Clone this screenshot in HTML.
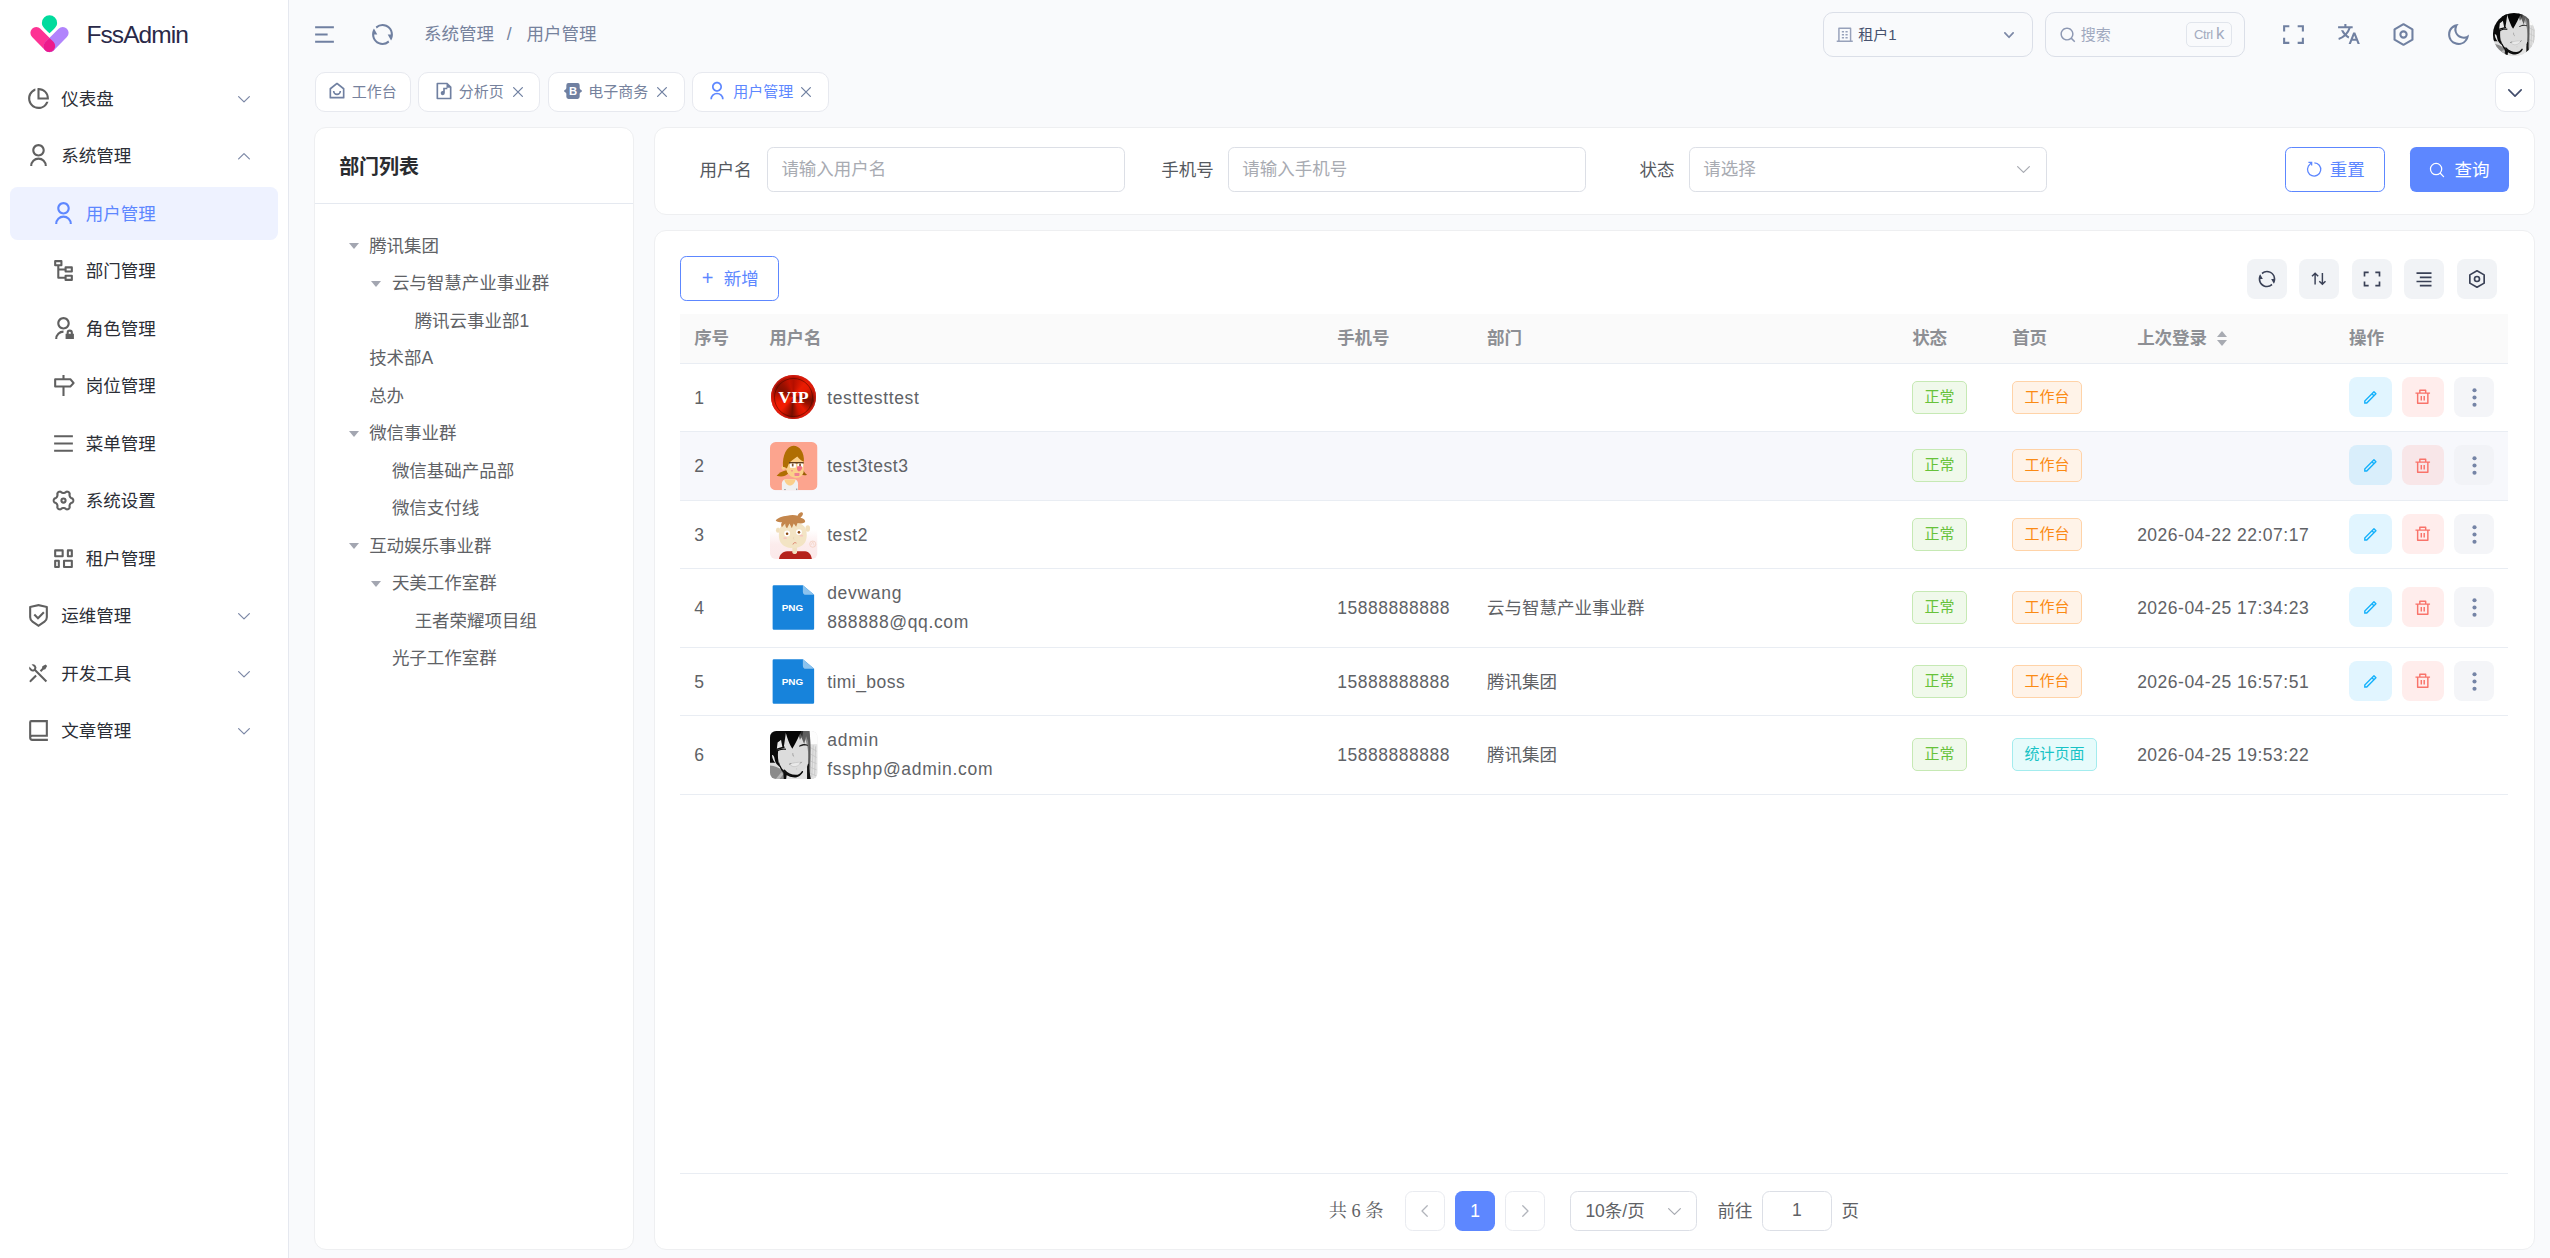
<!DOCTYPE html>
<html lang="zh-CN"><head><meta charset="utf-8"><title>FssAdmin</title><style>
*{box-sizing:border-box;margin:0;padding:0}
html,body{width:2550px;height:1258px;overflow:hidden;background:#f9fafc}
body{font-family:"Liberation Sans","Noto Sans CJK SC",sans-serif;font-size:14px;color:#2a3547}
@supports not (zoom:1.25){#app{transform:scale(1.25);transform-origin:0 0}}
#app{zoom:1.25;position:relative;width:2040px;height:1006.4px;overflow:hidden;background:#f9fafc}
.abs{position:absolute}
svg{display:block;overflow:visible}
.t{position:absolute;white-space:nowrap}
#side{position:absolute;left:0;top:0;width:230.8px;height:1006.4px;background:#fff;border-right:1px solid #e5e8ef}
.logo-t{left:69.2px;top:12.7px;font-size:19.6px;line-height:30px;color:#2a2948;letter-spacing:-.74px}
.mi{position:absolute;left:8px;width:214.4px;height:42.4px;border-radius:6px;color:#2b2e36;font-size:14px;line-height:42px}
.mi .tx{position:absolute;top:.7px;white-space:nowrap}
.mi.l1 .tx{left:41px}.mi.l2 .tx{left:60.6px}
.mi.act{background:#eef2ff;color:#5d87ff}
.bc{top:16.7px;font-size:14px;line-height:22px;color:#76829d}
.tab{position:absolute;top:57.8px;height:31.4px;background:#fff;border:1px solid #e7e9ef;border-radius:8px;font-size:12px;line-height:29.4px;color:#76829d;white-space:nowrap}
.tab .tx{position:absolute;top:.5px}
.tab.act{color:#5d87ff}
.card{position:absolute;background:#fff;border:1px solid #eeeff1;border-radius:9.6px}
.tn{position:absolute;font-size:14px;line-height:30px;height:30px;color:#606266;white-space:nowrap}
.ta{position:absolute;width:0;height:0;border-left:4.3px solid transparent;border-right:4.3px solid transparent;border-top:5.2px solid #a3a6b1}
.lbl{top:124px;font-size:14px;line-height:24px;color:#55595f}
.inp{position:absolute;top:117.7px;height:35.6px;width:286.6px;border:1px solid #dcdfe6;border-radius:5px;background:#fff;font-size:14px;line-height:33.6px;color:#a8abb2;padding-left:10.6px;white-space:nowrap}
.btn{position:absolute;border-radius:5px;font-size:14px;white-space:nowrap}
.th{top:258.7px;font-size:14px;line-height:24px;font-weight:700;color:#8d8f94}
.td{font-size:14px;line-height:23px;color:#606266}
.hl{position:absolute;left:544px;width:1462.4px;height:.8px;background:#e9edf3}
.tag{position:absolute;height:26.2px;border-radius:4px;font-size:12px;line-height:24.2px;text-align:center;border:1px solid;white-space:nowrap}
.tg{color:#67c23a;background:#f0f9eb;border-color:#c6e9b4;width:43.8px}
.to{color:#fb8a14;background:#fff3e8;border-color:#ffd3a8;width:55.9px}
.tc{color:#19c3c6;background:#e6fbfb;border-color:#a3ecee;width:68px}
.ab{position:absolute;height:32px;border-radius:6.4px}
.tb{position:absolute;top:207.2px;width:32px;height:32px;border-radius:6.4px;background:#f1f3f6;color:#363c4f}
.pg{font-size:14px;line-height:32px;color:#606266}
</style></head><body><div id="app">
<div id="side">
<svg class="abs" style="left:24.3px;top:11.6px" width="31" height="31" viewBox="0 0 31 31">
<path d="M15.6 .2a6.100 6.100 0 0 1 6.100 6.100c0 2.700-2.300 4.500-6.100 8.300-3.800-3.800-6.100-5.600-6.100-8.300A6.100 6.100 0 0 1 15.600 .2Z" fill="#01db9d"/>
<path d="M5 14.300L15.600 25" stroke="#fd3394" stroke-width="9.400" stroke-linecap="round"/>
<path d="M26.200 14.300L15.600 25" stroke="#b184fc" stroke-width="9.400" stroke-linecap="round"/>
<path d="M12.280 21.680l3.320-3.320 3.320 3.320a4.700 4.700 0 0 1-6.640 6.640 4.700 4.700 0 0 1 0-6.640Z" fill="#ed1a8c"/>
</svg>
<div class="t logo-t">FssAdmin</div>
<div class="mi l1" style="top:57.40px"><span class="abs" style="left:12.70px;top:11.00px;color:#606060;"><svg width="20" height="20" viewBox="0 0 24 24" fill="currentColor" style=""><path d="M9 2.458v2.124A8.003 8.003 0 0 0 12 20a8.003 8.003 0 0 0 7.419-5h2.123c-1.274 4.057-5.064 7-9.542 7-5.523 0-10-4.477-10-10 0-4.478 2.943-8.268 7-9.542zM12 2c5.523 0 10 4.477 10 10 0 .338-.017.67-.05 1H11V2.05c.329-.033.663-.05 1-.05zm1 2.062V11h6.938A8.004 8.004 0 0 0 13 4.062z"/></svg></span><span class="tx">仪表盘</span><svg class="abs" style="left:182.50px;top:19.30px" width="9.6" height="5.2" viewBox="0 0 9.6 5.2" fill="none" stroke="#7c88a6" stroke-width="1.0" stroke-linecap="round" stroke-linejoin="round"><path d="M0.5 0.5L4.8 4.7L9.1 0.5"/></svg></div>
<div class="mi l1" style="top:103.40px"><span class="abs" style="left:12.70px;top:11.00px;color:#606060;"><svg width="20" height="20" viewBox="0 0 24 24" fill="currentColor" style=""><path d="M4 22a8 8 0 1 1 16 0h-2a6 6 0 0 0-12 0H4zm8-9c-3.315 0-6-2.685-6-6s2.685-6 6-6 6 2.685 6 6-2.685 6-6 6zm0-2c2.21 0 4-1.79 4-4s-1.79-4-4-4-4 1.79-4 4 1.79 4 4 4z"/></svg></span><span class="tx">系统管理</span><svg class="abs" style="left:182.50px;top:18.80px" width="9.6" height="5.2" viewBox="0 0 9.6 5.2" fill="none" stroke="#7c88a6" stroke-width="1.0" stroke-linecap="round" stroke-linejoin="round"><path d="M0.5 4.7L4.8 0.5L9.1 4.7"/></svg></div>
<div class="mi l2 act" style="top:149.40px"><span class="abs" style="left:32.70px;top:11.00px;color:#5d87ff;"><svg width="20" height="20" viewBox="0 0 24 24" fill="currentColor" style=""><path d="M4 22a8 8 0 1 1 16 0h-2a6 6 0 0 0-12 0H4zm8-9c-3.315 0-6-2.685-6-6s2.685-6 6-6 6 2.685 6 6-2.685 6-6 6zm0-2c2.21 0 4-1.79 4-4s-1.79-4-4-4-4 1.79-4 4 1.79 4 4 4z"/></svg></span><span class="tx">用户管理</span></div>
<div class="mi l2" style="top:195.40px"><span class="abs" style="left:32.70px;top:11.00px;color:#606060;"><svg width="20" height="20" viewBox="0 0 24 24" fill="currentColor" style=""><path d="M10 2a1 1 0 0 1 1 1v4a1 1 0 0 1-1 1H8v2h5V9a1 1 0 0 1 1-1h6a1 1 0 0 1 1 1v4a1 1 0 0 1-1 1h-6a1 1 0 0 1-1-1v-1H8v6h5v-1a1 1 0 0 1 1-1h6a1 1 0 0 1 1 1v4a1 1 0 0 1-1 1h-6a1 1 0 0 1-1-1v-1H7a1 1 0 0 1-1-1V8H4a1 1 0 0 1-1-1V3a1 1 0 0 1 1-1h6zm9 16h-4v2h4v-2zm0-8h-4v2h4v-2zM9 4H5v2h4V4z"/></svg></span><span class="tx">部门管理</span></div>
<div class="mi l2" style="top:241.40px"><span class="abs" style="left:32.70px;top:11.00px;color:#606060;"><svg width="20" height="20" viewBox="0 0 24 24" fill="currentColor" style=""><path d="M12 14v2a6 6 0 0 0-6 6H4a8 8 0 0 1 8-8zm0-1c-3.315 0-6-2.685-6-6s2.685-6 6-6 6 2.685 6 6-2.685 6-6 6zm0-2c2.21 0 4-1.79 4-4s-1.79-4-4-4-4 1.79-4 4 1.79 4 4 4zm9 6h1v5h-8v-5h1v-1a3 3 0 0 1 6 0v1zm-2 0v-1a1 1 0 0 0-2 0v1h2z"/></svg></span><span class="tx">角色管理</span></div>
<div class="mi l2" style="top:287.40px"><span class="abs" style="left:32.70px;top:11.00px;color:#606060;"><svg width="20" height="20" viewBox="0 0 24 24" fill="currentColor" style=""><path d="M13 2v3h5.586a1 1 0 0 1 .707.293l3.1 3.5a1 1 0 0 1 0 1.414l-3.1 3.5a1 1 0 0 1-.707.293H13v8h-2v-8H4a1 1 0 0 1-1-1V6a1 1 0 0 1 1-1h7V2h2zm5.172 5H5v5h13.172l2.2-2.5-2.2-2.5z"/></svg></span><span class="tx">岗位管理</span></div>
<div class="mi l2" style="top:333.40px"><span class="abs" style="left:32.70px;top:11.00px;color:#606060;"><svg width="20" height="20" viewBox="0 0 24 24" fill="currentColor" style=""><path d="M3 4h18v2H3V4zm0 7h18v2H3v-2zm0 7h18v2H3v-2z"/></svg></span><span class="tx">菜单管理</span></div>
<div class="mi l2" style="top:379.40px"><span class="abs" style="left:32.70px;top:11.00px;color:#606060;"><svg width="20" height="20" viewBox="0 0 24 24" fill="none" stroke="currentColor" style=""><path d="M21.40 12.00 L21.39 12.25 L21.35 12.49 L21.30 12.73 L21.22 12.97 L21.11 13.20 L20.99 13.42 L20.83 13.64 L20.65 13.84 L20.42 14.02 L20.02 14.15 L19.61 14.25 L19.38 14.40 L19.18 14.54 L19.00 14.69 L18.84 14.83 L18.70 14.98 L18.57 15.13 L18.44 15.28 L18.33 15.44 L18.24 15.60 L18.15 15.77 L18.07 15.94 L17.99 16.12 L17.93 16.31 L17.88 16.51 L17.83 16.72 L17.79 16.95 L17.76 17.19 L17.76 17.46 L17.87 17.87 L17.96 18.28 L17.92 18.57 L17.84 18.83 L17.73 19.07 L17.60 19.29 L17.45 19.50 L17.28 19.69 L17.10 19.86 L16.91 20.01 L16.70 20.14 L16.48 20.25 L16.25 20.35 L16.02 20.42 L15.77 20.47 L15.52 20.49 L15.26 20.50 L15.00 20.47 L14.73 20.41 L14.46 20.30 L14.15 20.02 L13.85 19.72 L13.61 19.59 L13.39 19.49 L13.17 19.41 L12.97 19.34 L12.77 19.29 L12.57 19.25 L12.38 19.22 L12.19 19.21 L12.00 19.20 L11.81 19.21 L11.62 19.22 L11.43 19.25 L11.23 19.29 L11.03 19.34 L10.83 19.41 L10.61 19.49 L10.39 19.59 L10.15 19.72 L9.85 20.02 L9.54 20.30 L9.27 20.41 L9.00 20.47 L8.74 20.50 L8.48 20.49 L8.23 20.47 L7.98 20.42 L7.75 20.35 L7.52 20.25 L7.30 20.14 L7.09 20.01 L6.90 19.86 L6.72 19.69 L6.55 19.50 L6.40 19.29 L6.27 19.07 L6.16 18.83 L6.08 18.57 L6.04 18.28 L6.13 17.87 L6.24 17.46 L6.24 17.19 L6.21 16.95 L6.17 16.72 L6.12 16.51 L6.07 16.31 L6.01 16.12 L5.93 15.94 L5.85 15.77 L5.76 15.60 L5.67 15.44 L5.56 15.28 L5.43 15.13 L5.30 14.98 L5.16 14.83 L5.00 14.69 L4.82 14.54 L4.62 14.40 L4.39 14.25 L3.98 14.15 L3.58 14.02 L3.35 13.84 L3.17 13.64 L3.01 13.42 L2.89 13.20 L2.78 12.97 L2.70 12.73 L2.65 12.49 L2.61 12.25 L2.60 12.00 L2.61 11.75 L2.65 11.51 L2.70 11.27 L2.78 11.03 L2.89 10.80 L3.01 10.58 L3.17 10.36 L3.35 10.16 L3.58 9.98 L3.98 9.85 L4.39 9.75 L4.62 9.60 L4.82 9.46 L5.00 9.31 L5.16 9.17 L5.30 9.02 L5.43 8.87 L5.56 8.72 L5.67 8.56 L5.76 8.40 L5.85 8.23 L5.93 8.06 L6.01 7.88 L6.07 7.69 L6.12 7.49 L6.17 7.28 L6.21 7.05 L6.24 6.81 L6.24 6.54 L6.13 6.13 L6.04 5.72 L6.08 5.43 L6.16 5.17 L6.27 4.93 L6.40 4.71 L6.55 4.50 L6.72 4.31 L6.90 4.14 L7.09 3.99 L7.30 3.86 L7.52 3.75 L7.75 3.65 L7.98 3.58 L8.23 3.53 L8.48 3.51 L8.74 3.50 L9.00 3.53 L9.27 3.59 L9.54 3.70 L9.85 3.98 L10.15 4.28 L10.39 4.41 L10.61 4.51 L10.83 4.59 L11.03 4.66 L11.23 4.71 L11.43 4.75 L11.62 4.78 L11.81 4.79 L12.00 4.80 L12.19 4.79 L12.38 4.78 L12.57 4.75 L12.77 4.71 L12.97 4.66 L13.17 4.59 L13.39 4.51 L13.61 4.41 L13.85 4.28 L14.15 3.98 L14.46 3.70 L14.73 3.59 L15.00 3.53 L15.26 3.50 L15.52 3.51 L15.77 3.53 L16.02 3.58 L16.25 3.65 L16.48 3.75 L16.70 3.86 L16.91 3.99 L17.10 4.14 L17.28 4.31 L17.45 4.50 L17.60 4.71 L17.73 4.93 L17.84 5.17 L17.92 5.43 L17.96 5.72 L17.87 6.13 L17.76 6.54 L17.76 6.81 L17.79 7.05 L17.83 7.28 L17.88 7.49 L17.93 7.69 L17.99 7.88 L18.07 8.06 L18.15 8.23 L18.24 8.40 L18.33 8.56 L18.44 8.72 L18.57 8.87 L18.70 9.02 L18.84 9.17 L19.00 9.31 L19.18 9.46 L19.38 9.60 L19.61 9.75 L20.02 9.85 L20.42 9.98 L20.65 10.16 L20.83 10.36 L20.99 10.58 L21.11 10.80 L21.22 11.03 L21.30 11.27 L21.35 11.51 L21.39 11.75Z" stroke-width="2"/><circle cx="12" cy="12" r="2" stroke-width="2"/></svg></span><span class="tx">系统设置</span></div>
<div class="mi l2" style="top:425.40px"><span class="abs" style="left:32.70px;top:11.00px;color:#606060;"><svg width="20" height="20" viewBox="0 0 24 24" fill="none" stroke="currentColor" style=""><path d="M4 4.2h7.2v5.6H4zM16.200 4.200h3.800v5.600h-3.800zM4 14.200h3.500v6H4zM12.500 14.200H20v6h-7.500z" stroke-width="2" stroke-linejoin="round"/></svg></span><span class="tx">租户管理</span></div>
<div class="mi l1" style="top:471.40px"><span class="abs" style="left:12.70px;top:11.00px;color:#606060;"><svg width="20" height="20" viewBox="0 0 24 24" fill="currentColor" style=""><path d="M12 1l8.217 1.826a1 1 0 0 1 .783.976v9.987a6 6 0 0 1-2.672 4.992L12 23l-6.328-4.219A6 6 0 0 1 3 13.79V3.802a1 1 0 0 1 .783-.976L12 1zm0 2.049L5 4.604v9.185a4 4 0 0 0 1.781 3.328L12 20.597l5.219-3.48A4 4 0 0 0 19 13.79V4.604L12 3.05zm4.452 5.173l1.415 1.414L11.503 16 7.26 11.757l1.414-1.414 2.828 2.829 4.95-4.95z"/></svg></span><span class="tx">运维管理</span><svg class="abs" style="left:182.50px;top:19.30px" width="9.6" height="5.2" viewBox="0 0 9.6 5.2" fill="none" stroke="#7c88a6" stroke-width="1.0" stroke-linecap="round" stroke-linejoin="round"><path d="M0.5 0.5L4.8 4.7L9.1 0.5"/></svg></div>
<div class="mi l1" style="top:517.40px"><span class="abs" style="left:12.70px;top:11.00px;color:#606060;"><svg width="20" height="20" viewBox="0 0 24 24" fill="currentColor" style=""><path d="M5.33 3.271a3.5 3.5 0 0 1 4.254 4.963l10.709 10.71-1.414 1.414-10.71-10.71a3.502 3.502 0 0 1-4.962-4.255L5.444 7.63a1.5 1.5 0 1 0 2.121-2.121L5.329 3.27zm10.367 1.884l3.182-1.768 1.414 1.414-1.768 3.182-1.768.354-2.12 2.121-1.415-1.414 2.121-2.121.354-1.768zm-6.718 8.132l1.414 1.414-5.303 5.303a1 1 0 0 1-1.492-1.327l.078-.087 5.303-5.303z"/></svg></span><span class="tx">开发工具</span><svg class="abs" style="left:182.50px;top:19.30px" width="9.6" height="5.2" viewBox="0 0 9.6 5.2" fill="none" stroke="#7c88a6" stroke-width="1.0" stroke-linecap="round" stroke-linejoin="round"><path d="M0.5 0.5L4.8 4.7L9.1 0.5"/></svg></div>
<div class="mi l1" style="top:563.40px"><span class="abs" style="left:12.70px;top:11.00px;color:#606060;"><svg width="20" height="20" viewBox="0 0 24 24" fill="currentColor" style=""><path d="M21 18H6a1 1 0 0 0 0 2h15v2H6a3 3 0 0 1-3-3V4a2 2 0 0 1 2-2h16v16zM5 16.05c.162-.033.329-.05.5-.05H19V4H5v12.05z"/></svg></span><span class="tx">文章管理</span><svg class="abs" style="left:182.50px;top:19.30px" width="9.6" height="5.2" viewBox="0 0 9.6 5.2" fill="none" stroke="#7c88a6" stroke-width="1.0" stroke-linecap="round" stroke-linejoin="round"><path d="M0.5 0.5L4.8 4.7L9.1 0.5"/></svg></div>
</div>
<span class="abs" style="left:249.60px;top:17.60px;color:#7080a1;"><svg width="20" height="20" viewBox="0 0 24 24" fill="currentColor" style=""><path d="M3 4h18v2H3V4zm0 7h12v2H3v-2zm0 7h18v2H3v-2z"/></svg></span>
<span class="abs" style="left:296.00px;top:17.40px;color:#7080a1;"><svg width="20" height="20" viewBox="0 0 24 24" fill="currentColor" style=""><path d="M5.463 4.433A9.961 9.961 0 0 1 12 2c5.523 0 10 4.477 10 10 0 2.136-.67 4.116-1.81 5.74L17 12h3A8 8 0 0 0 6.46 6.228l-.997-1.795zm13.074 15.134A9.961 9.961 0 0 1 12 22C6.477 22 2 17.523 2 12c0-2.136.67-4.116 1.81-5.74L7 12H4a8 8 0 0 0 13.54 5.772l.997 1.795z"/></svg></span>
<div class="t bc" style="left:339.2px">系统管理</div><div class="t bc" style="left:405.4px">/</div><div class="t bc" style="left:421.2px">用户管理</div>
<div class="abs" style="left:1458.4px;top:9.8px;width:167.9px;height:35.7px;border:1px solid #dbdfe8;border-radius:8px"></div>
<span class="abs" style="left:1469.00px;top:20.70px;color:#97a1ba;"><svg width="14" height="14" viewBox="0 0 24 24" fill="currentColor" style=""><path d="M21 20h2v2H1v-2h2V3a1 1 0 0 1 1-1h16a1 1 0 0 1 1 1v17zm-2 0V4H5v16h14zM8 11h3v2H8v-2zm0-4h3v2H8V7zm0 8h3v2H8v-2zm5 0h3v2h-3v-2zm0-4h3v2h-3v-2zm0-4h3v2h-3V7z"/></svg></span>
<div class="t" style="left:1486.6px;top:16.6px;font-size:12px;line-height:22px;color:#47526f">租户1</div>
<svg class="abs" style="left:1603.20px;top:25.75px" width="8" height="4.9" viewBox="0 0 8 4.9" fill="none" stroke="#7c88a6" stroke-width="1.4" stroke-linecap="round" stroke-linejoin="round"><path d="M0.7 0.7L4.0 4.2L7.3 0.7"/></svg>
<div class="abs" style="left:1636px;top:9.8px;width:159.9px;height:35.7px;border:1px solid #dbdfe8;border-radius:8px"></div>
<span class="abs" style="left:1647.40px;top:20.90px;color:#8d98b3;"><svg width="14" height="14" viewBox="0 0 24 24" fill="currentColor" style=""><path d="M18.031 16.617l4.283 4.282-1.415 1.415-4.282-4.283A8.96 8.96 0 0 1 11 20c-4.968 0-9-4.032-9-9s4.032-9 9-9 9 4.032 9 9a8.96 8.96 0 0 1-1.969 5.617zm-2.006-.742A6.977 6.977 0 0 0 18 11c0-3.868-3.133-7-7-7-3.868 0-7 3.132-7 7 0 3.867 3.132 7 7 7a6.977 6.977 0 0 0 4.875-1.975l.15-.15z"/></svg></span>
<div class="t" style="left:1664.5px;top:16.6px;font-size:12px;line-height:22px;color:#a0a9bf">搜索</div>
<div class="t" style="left:1748.8px;top:17.7px;width:36.7px;height:19.8px;border:1px solid #e1e5ec;border-radius:4px;font-size:10.4px;line-height:17.8px;color:#a3abbf;text-align:center;letter-spacing:-.3px">Ctrl <span style="font-size:13.4px;position:relative;top:-.3px">k</span></div>
<span class="abs" style="left:1824.70px;top:17.70px;color:#7080a1;"><svg width="20" height="20" viewBox="0 0 24 24" fill="currentColor" style=""><path d="M20 3h2v6h-2V5h-4V3h4zM4 3h4v2H4v4H2V3h2zm16 16v-4h2v6h-6v-2h4zM4 19h4v2H2v-6h2v4z"/></svg></span>
<span class="abs" style="left:1868.90px;top:17.60px;color:#7080a1;"><svg width="20" height="20" viewBox="0 0 24 24" fill="currentColor" style=""><path d="M18.5 10l4.4 11h-2.155l-1.201-3h-4.09l-1.199 3h-2.154L16.5 10h2zM10 2v2h6v2h-1.968a18.222 18.222 0 0 1-3.62 6.301 14.864 14.864 0 0 0 2.336 1.707l-.751 1.878A17.015 17.015 0 0 1 9 13.725a16.676 16.676 0 0 1-6.201 3.548l-.536-1.929a14.7 14.7 0 0 0 5.327-3.042A18.078 18.078 0 0 1 4.767 8h2.24A16.032 16.032 0 0 0 9 10.877a16.165 16.165 0 0 0 2.91-4.876L2 6V4h6V2h2zm7.5 10.885L16.253 16h2.492L17.5 12.885z"/></svg></span>
<span class="abs" style="left:1912.60px;top:17.50px;color:#7080a1;"><svg width="20" height="20" viewBox="0 0 24 24" fill="none" stroke="currentColor" style=""><path d="M12 2.100l8.600 4.950v9.900L12 21.900l-8.600-4.950v-9.900z" stroke-width="2" stroke-linejoin="round"/><circle cx="12" cy="12" r="3" stroke-width="2"/></svg></span>
<span class="abs" style="left:1956.70px;top:17.50px;color:#7080a1;"><svg width="20" height="20" viewBox="0 0 24 24" fill="currentColor" style=""><path d="M10 7a7 7 0 0 0 12 4.9v.1c0 5.523-4.477 10-10 10S2 17.523 2 12 6.477 2 12 2h.1A6.979 6.979 0 0 0 10 7zm-6 5a8 8 0 0 0 15.062 3.762A9 9 0 0 1 8.238 4.938 7.999 7.999 0 0 0 4 12z"/></svg></span>
<div class="abs" style="left:1994px;top:10.2px;width:34.2px;height:34.2px;border-radius:50%;overflow:hidden"><svg width="34.200" height="34.200" viewBox="0 0 100 100"><rect width="100" height="100" fill="#dcdcdc"/><rect x="82" y="0" width="18" height="28" fill="#fdfdfd"/><rect x="82" y="28" width="18" height="72" fill="#e2e2e2"/><path d="M84 34l14 8M85 48l13 7M84 62l14 6M86 76l12 5M85 88l13 6M91 30l-3 66M96 32l-2 60" stroke="#c4c4c4" stroke-width="1.600" fill="none"/><path d="M14 40c0-16 10-30 30-34 18-3 32 2 36 18 3 14 4 32 0 46-4 14-14 24-24 24-16 0-30-10-36-26-3-8-6-18-6-28Z" fill="#dcdcdc"/><path d="M66 0h17c2 14 3 30 2 46 1 20 0 38-1 54h-6c2-10 0-20 2-30 1-14 1-28-2-40-2-10-6-20-12-30Z" fill="#8f8f8f"/><path d="M79 0h4c2 20 3 44 1 68l-4 4c2-24 1-48-1-72Z" fill="#5c5c5c"/><path d="M58 0h24l-1 24-5-13-4 16-6-14-3 6Z" fill="#5e5e5e"/><path d="M60 0h10l-2 12Z" fill="#2c2c2c"/><path d="M80 68c2 0 3 1 3 3-1 9 1 19 3 29h-8c-2-10-2-23 2-32Z" fill="#141414"/><path d="M34 86c8 6 20 8 30 2l14-14v26H34Z" fill="#e4e4e4"/><path d="M0 72c10 1 18 4 24 9 5 5 9 12 10 19H0Z" fill="#8b8b8b"/><path d="M12 100l12-14 4 4-8 10Z" fill="#b9b9b9"/><path d="M19 64c2 9 8 19 18 25 8 5 18 6 25 3 3-1 5-4 6-7-2 7-8 12-16 12-5 0-9-1-13-3l-4-2-1 8h-5l-1-13c-6-6-9-14-9-23Z" fill="#0c0c0c"/><path d="M30 82c6 7 15 11 24 11 6 0 11-3 14-8" fill="none" stroke="#0c0c0c" stroke-width="3.400" stroke-linecap="round"/><path d="M0 0h34c-6 8-12 18-15 30-3 12-3 24-1 34 1 5 3 9 5 12-4-2-8-6-11-10H0Z" fill="#0a0a0a"/><path d="M4 50c2-1 4 1 5 5 1 5 2 9 4 13-4-3-8-9-9-18Z" fill="#e8e8e8"/><path d="M16 24l8-6-1 8 6-4-2 12-6 2-7 4Z" fill="#e9e9e9"/><path d="M13 40l18-5-1-3-17 5Z" fill="#0b0b0b"/><path d="M20 0h14l-5 34c-1 0-2 0-3-1-2-10-4-22-6-33Z" fill="#0a0a0a"/><path d="M32 0h34c-3 6-6 12-9 19-3 6-6 12-10 18-5-7-8-16-11-24-1-4-3-9-4-13Z" fill="#050505"/><path d="M13 42c6-5 13-7 21-5l-1 2.500c-7-1-13 0-19 4.500Z" fill="#111"/><path d="M61 31c6-4 13-5 19-2l-1 2c-6-2-11-1-17 2Z" fill="#222"/><path d="M48 47c0 2 0 5 2 6" stroke="#8f8f8f" stroke-width="1.600" fill="none" stroke-linecap="round"/><path d="M41 69c8-3 17-4 25-4-3 4-7 8-12 9-5 1-10-1-13-5Z" fill="#e9e9e9" stroke="#b5b5b5" stroke-width="1"/><path d="M41 69l3-1M66 65l-2 2" stroke="#6a6a6a" stroke-width="1.400" stroke-linecap="round"/><circle cx="56" cy="79" r="1.200" fill="#c6c6c6"/></svg></div>
<div class="tab" style="left:251.6px;width:76.8px"><span class="abs" style="left:9.10px;top:6.30px;color:#7080a1;"><svg width="16" height="16" viewBox="0 0 24 24" fill="currentColor" style=""><path d="M19 19V9.799l-7-5.522-7 5.522V19h14zm2 1a1 1 0 0 1-1 1H4a1 1 0 0 1-1-1V9.314a1 1 0 0 1 .38-.785l8-6.311a1 1 0 0 1 1.24 0l8 6.31a1 1 0 0 1 .38.786V20zM7 12h2a3 3 0 0 0 6 0h2a5 5 0 0 1-10 0z"/></svg></span><span class="tx" style="left:29.0px">工作台</span></div>
<div class="tab" style="left:334.4px;width:97.4px"><span class="abs" style="left:11.70px;top:6.30px;color:#7080a1;"><svg width="16" height="16" viewBox="0 0 24 24" fill="currentColor" style=""><path d="M16 8v2h-3v4.5a2.5 2.5 0 1 1-2-2.45V8h4V4H5v16h14V8h-3zM3 2.992C3 2.444 3.447 2 3.999 2H16l5 5v13.993A1 1 0 0 1 20.007 22H3.993A1 1 0 0 1 3 21.008V2.992z"/></svg></span><span class="tx" style="left:31.799999999999997px">分析页</span><svg class="abs" style="left:74.8px;top:11.2px" width="8" height="8" viewBox="0 0 8 8" fill="none" stroke="#7080a1" stroke-width="1" stroke-linecap="round"><path d="M.5.5l7 7M7.500.5l-7 7"/></svg></div>
<div class="tab" style="left:438.5px;width:109.4px"><span class="abs" style="left:11.40px;top:6.30px;color:#7080a1;"><svg width="16" height="16" viewBox="0 0 24 24" style=""><path d="M6.500 2.500h11a2.500 2.500 0 0 1 2.500 2.500v3.200c0 1.300.800 2.300 2.500 2.800v2c-1.700.500-2.500 1.500-2.500 2.800V19a2.500 2.500 0 0 1-2.500 2.500h-11A2.500 2.500 0 0 1 4 19v-3.200c0-1.300-.800-2.300-2.500-2.800v-2C3.200 10.500 4 9.500 4 8.200V5a2.500 2.500 0 0 1 2.500-2.500z" fill="currentColor"/><text x="12.100" y="16.900" text-anchor="middle" font-family="Liberation Sans,sans-serif" font-weight="700" font-size="13.500" fill="#fff">B</text></svg></span><span class="tx" style="left:31.299999999999997px">电子商务</span><svg class="abs" style="left:86.0px;top:11.2px" width="8" height="8" viewBox="0 0 8 8" fill="none" stroke="#7080a1" stroke-width="1" stroke-linecap="round"><path d="M.5.5l7 7M7.500.5l-7 7"/></svg></div>
<div class="tab act" style="left:553.6px;width:109.3px"><span class="abs" style="left:11.50px;top:6.30px;color:#5d87ff;"><svg width="16" height="16" viewBox="0 0 24 24" fill="currentColor" style=""><path d="M4 22a8 8 0 1 1 16 0h-2a6 6 0 0 0-12 0H4zm8-9c-3.315 0-6-2.685-6-6s2.685-6 6-6 6 2.685 6 6-2.685 6-6 6zm0-2c2.21 0 4-1.79 4-4s-1.79-4-4-4-4 1.79-4 4 1.79 4 4 4z"/></svg></span><span class="tx" style="left:32.2px">用户管理</span><svg class="abs" style="left:86.6px;top:11.2px" width="8" height="8" viewBox="0 0 8 8" fill="none" stroke="#7080a1" stroke-width="1" stroke-linecap="round"><path d="M.5.5l7 7M7.500.5l-7 7"/></svg></div>
<div class="abs" style="left:1996.3px;top:57.8px;width:31.4px;height:31.4px;background:#fff;border:1px solid #e7e9ef;border-radius:8px"></div>
<svg class="abs" style="left:2006.30px;top:71.10px" width="11.2" height="6.4" viewBox="0 0 11.2 6.4" fill="none" stroke="#414c6b" stroke-width="1.3" stroke-linecap="round" stroke-linejoin="round"><path d="M0.65 0.65L5.6 5.75L10.549999999999999 0.65"/></svg>
<div class="card" style="left:251.2px;top:101.6px;width:256px;height:898.4px"></div>
<div class="t" style="left:271.3px;top:121.4px;font-size:16px;line-height:24px;font-weight:700;color:#2a2c30">部门列表</div>
<div class="abs" style="left:252px;top:162.4px;width:254.4px;height:.8px;background:#e5e9f0"></div>
<div class="tn" style="left:295.3px;top:182.1px">腾讯集团</div>
<div class="ta" style="left:279.3px;top:194.5px"></div>
<div class="tn" style="left:313.5px;top:212.1px">云与智慧产业事业群</div>
<div class="ta" style="left:296.9px;top:224.5px"></div>
<div class="tn" style="left:331.7px;top:242.1px">腾讯云事业部1</div>
<div class="tn" style="left:295.3px;top:272.1px">技术部A</div>
<div class="tn" style="left:295.3px;top:302.1px">总办</div>
<div class="tn" style="left:295.3px;top:332.1px">微信事业群</div>
<div class="ta" style="left:279.3px;top:344.5px"></div>
<div class="tn" style="left:313.5px;top:362.1px">微信基础产品部</div>
<div class="tn" style="left:313.5px;top:392.1px">微信支付线</div>
<div class="tn" style="left:295.3px;top:422.1px">互动娱乐事业群</div>
<div class="ta" style="left:279.3px;top:434.5px"></div>
<div class="tn" style="left:313.5px;top:452.1px">天美工作室群</div>
<div class="ta" style="left:296.9px;top:464.5px"></div>
<div class="tn" style="left:331.7px;top:482.1px">王者荣耀项目组</div>
<div class="tn" style="left:313.5px;top:512.1px">光子工作室群</div>
<div class="card" style="left:523.2px;top:101.6px;width:1504.8px;height:70.4px"></div>
<div class="t lbl" style="left:559.5px">用户名</div><div class="inp" style="left:613.7px">请输入用户名</div>
<div class="t lbl" style="left:929px">手机号</div><div class="inp" style="left:982.4px">请输入手机号</div>
<div class="t lbl" style="left:1311.6px">状态</div><div class="inp" style="left:1351.2px">请选择</div>
<svg class="abs" style="left:1613.60px;top:133.00px" width="10.4" height="5.6" viewBox="0 0 10.4 5.6" fill="none" stroke="#a8abb2" stroke-width="1.0" stroke-linecap="round" stroke-linejoin="round"><path d="M0.5 0.5L5.2 5.1L9.9 0.5"/></svg>
<div class="btn" style="left:1828px;top:117.7px;width:80px;height:35.6px;border:1px solid #5d87ff;color:#5d87ff;background:#fff;line-height:33.6px"><span class="abs" style="left:35px;top:.8px">重置</span></div>
<svg class="abs" style="left:1844.4px;top:129px" width="12.2" height="12.2" viewBox="0 0 24 24" fill="none" stroke="#5d87ff" stroke-width="2" stroke-linecap="butt" stroke-linejoin="miter"><path d="M13.160 2.800A10.400 10.400 0 1 1 3.700 8.160L8.900 2.200"/><path d="M3.800 2.200h5.100v5"/></svg>
<div class="btn" style="left:1928px;top:117.7px;width:79.3px;height:35.6px;background:#5d87ff;color:#fff;line-height:35.6px"><span class="abs" style="left:35.6px;top:.8px">查询</span></div>
<svg class="abs" style="left:1943.5px;top:129.3px" width="12.6" height="12.6" viewBox="0 0 24 24" fill="none" stroke="#fff" stroke-width="1.9" stroke-linecap="round"><circle cx="10.800" cy="10.800" r="8.600"/><path d="M17.200 17.200l5 5"/></svg>
<div class="card" style="left:523.2px;top:184px;width:1504.8px;height:816px"></div>
<div class="btn" style="left:544px;top:205px;width:79.200px;height:35.600px;border:1px solid #5d87ff;color:#5d87ff;background:#fff;line-height:33.6px"><span class="abs" style="left:16.600px;font-size:16px;top:-.5px">+</span><span class="abs" style="left:34.200px;top:.8px">新增</span></div>
<div class="tb" style="left:1797.2px"><span class="abs" style="left:8.10px;top:8.10px;color:#3a4156;"><svg width="16" height="16" viewBox="0 0 24 24" fill="currentColor" style=""><path d="M5.463 4.433A9.961 9.961 0 0 1 12 2c5.523 0 10 4.477 10 10 0 2.136-.67 4.116-1.81 5.74L17 12h3A8 8 0 0 0 6.46 6.228l-.997-1.795zm13.074 15.134A9.961 9.961 0 0 1 12 22C6.477 22 2 17.523 2 12c0-2.136.67-4.116 1.81-5.74L7 12H4a8 8 0 0 0 13.54 5.772l.997 1.795z"/></svg></span></div>
<div class="tb" style="left:1839.2px"><span class="abs" style="left:9.10px;top:9.10px;color:#3a4156;"><svg width="14" height="14" viewBox="0 0 24 24" fill="currentColor" style=""><path d="M11.950 7.950l-1.414 1.414L8 6.828V20H6V6.828L3.465 9.364 2.050 7.950 7 3l4.950 4.950zm10 8.100L17 21l-4.950-4.950 1.414-1.414 2.537 2.536L16 4h2v13.172l2.536-2.536 1.414 1.414z"/></svg></span></div>
<div class="tb" style="left:1881.2px"><span class="abs" style="left:8.10px;top:8.10px;color:#3a4156;"><svg width="16" height="16" viewBox="0 0 24 24" fill="currentColor" style=""><path d="M8 3v2H4v4H2V3h6zM2 21v-6h2v4h4v2H2zm20 0h-6v-2h4v-4h2v6zm0-12h-2V5h-4V3h6v6z"/></svg></span></div>
<div class="tb" style="left:1923.2px"><span class="abs" style="left:8.10px;top:8.10px;color:#3a4156;"><svg width="16" height="16" viewBox="0 0 24 24" fill="currentColor" style=""><path d="M3 4h18v2H3V4zm4 15h14v2H7v-2zm-4-5h18v2H3v-2zm4-5h14v2H7V9z"/></svg></span></div>
<div class="tb" style="left:1965.2px"><span class="abs" style="left:8.10px;top:8.10px;color:#3a4156;"><svg width="16" height="16" viewBox="0 0 24 24" fill="none" stroke="currentColor" style=""><path d="M12 2.100l8.600 4.950v9.900L12 21.900l-8.600-4.950v-9.900z" stroke-width="2" stroke-linejoin="round"/><circle cx="12" cy="12" r="3" stroke-width="2"/></svg></span></div>
<div class="abs" style="left:544px;top:251.1px;width:1462.400px;height:39.400px;background:#fafafa"></div>
<div class="t th" style="left:555.3px">序号</div>
<div class="t th" style="left:615.3px">用户名</div>
<div class="t th" style="left:1069.7px">手机号</div>
<div class="t th" style="left:1189.6px">部门</div>
<div class="t th" style="left:1529.7px">状态</div>
<div class="t th" style="left:1609.7px">首页</div>
<div class="t th" style="left:1709.7px">上次登录</div>
<div class="t th" style="left:1879.2px">操作</div>
<div class="abs" style="left:1773.3px;top:265.100px;width:0;height:0;border-left:4.200px solid transparent;border-right:4.200px solid transparent;border-bottom:5px solid #a8abb2"></div>
<div class="abs" style="left:1773.3px;top:272.300px;width:0;height:0;border-left:4.200px solid transparent;border-right:4.200px solid transparent;border-top:5px solid #a8abb2"></div>
<div class="hl" style="top:290.4px"></div>
<div class="hl" style="top:344.80px"></div>
<div class="t td" style="left:555.3px;top:306.8px">1</div>
<div class="abs" style="left:615.7px;top:298.8px;width:38px;height:38px"><div style="position:absolute;left:1.4px;top:1.2px;width:35.4px;height:35.4px;border-radius:50%;background:conic-gradient(from 0deg,#b50f00 0deg,#ea1c02 40deg,#e41a02 60deg,#7c0e00 100deg,#931100 115deg,#e61a02 140deg,#d41500 160deg,#740e00 185deg,#a81000 200deg,#f21c02 225deg,#ee1b02 250deg,#c81400 270deg,#860f00 300deg,#9a1000 320deg,#c41200 345deg,#b50f00 360deg)"></div><div style="position:absolute;left:3.6px;top:3.400px;width:31px;height:31px;border-radius:50%;border:.8px solid rgba(70,5,0,.55)"></div><div style="position:absolute;left:1.400px;top:1.200px;width:35.400px;height:35.400px;border-radius:50%;box-shadow:inset 0 0 0 1.200px rgba(215,30,20,.75)"></div><div style="position:absolute;left:0;width:38px;top:11.1px;text-align:center;font-family:'Liberation Serif',serif;font-weight:700;font-size:14.2px;line-height:16px;color:#fff;letter-spacing:-.1px">VIP</div></div>
<div class="t td" style="left:661.7px;top:306.8px"><span style="letter-spacing:0.517px">testtesttest</span></div>
<div class="tag tg" style="left:1529.7px;top:304.7px">正常</div>
<div class="tag to" style="left:1609.7px;top:304.7px">工作台</div>
<div class="ab" style="left:1879.2px;top:301.4px;width:34.2px;background:#e1f5ff"><span class="abs" style="left:10.40px;top:9.50px;color:#14b1fb;"><svg width="13.4" height="13.4" viewBox="0 0 24 24" fill="currentColor" style=""><path d="M15.728 9.686l-1.414-1.414L5 17.586V19h1.414l9.314-9.314zm1.414-1.414l1.414-1.414-1.414-1.414-1.414 1.414 1.414 1.414zM7.242 21H3v-4.243L16.435 3.322a1 1 0 0 1 1.414 0l2.829 2.829a1 1 0 0 1 0 1.414L7.243 21z"/></svg></span></div>
<div class="ab" style="left:1921.5px;top:301.4px;width:34px;background:#ffedec"><span class="abs" style="left:10.00px;top:9.20px;color:#f9736a;"><svg width="14" height="14" viewBox="0 0 24 24" fill="currentColor" style=""><path d="M17 6h5v2h-2v13a1 1 0 0 1-1 1H5a1 1 0 0 1-1-1V8H2V6h5V3a1 1 0 0 1 1-1h8a1 1 0 0 1 1 1v3zm1 2H6v12h12V8zm-9 3h2v6H9v-6zm4 0h2v6h-2v-6zM9 4v2h6V4H9z"/></svg></span></div>
<div class="ab" style="left:1963px;top:301.4px;width:32.3px;background:#f4f5f8"><svg class="abs" style="left:14.6px;top:8.6px" width="4" height="15" viewBox="0 0 4 15" fill="#7584a6"><circle cx="2" cy="1.800" r="1.650"/><circle cx="2" cy="7.600" r="1.650"/><circle cx="2" cy="13.400" r="1.650"/></svg></div>
<div class="abs" style="left:544px;top:345.60px;width:1462.400px;height:54.40px;background:#f7f8fc"></div>
<div class="hl" style="top:400.00px"></div>
<div class="t td" style="left:555.3px;top:361.6px">2</div>
<div class="abs" style="left:615.7px;top:353.6px;width:38px;height:38px"><svg width="38" height="38.6" viewBox="0 0 100 100" preserveAspectRatio="none"><defs><clipPath id="gc"><rect width="100" height="100" rx="12"/></clipPath></defs><g clip-path="url(#gc)"><rect width="100" height="100" fill="#fca48e"/><path d="M14 70c4-5 12-10 22-12l2 8c-5 5-14 7-24 4Z" fill="#b06e02"/><path d="M63 60l6-3c3 5 6 9 9 11-4 2-9 1-13-1Z" fill="#9a5e06"/><path d="M47 84h10v10H47Z" fill="#f6c27e"/><path d="M25 100V86c0-5 3-8 7-9h20c4 1 7 4 7 9v14Z" fill="#f0f0f0"/><path d="M30 77c2 10 8 13 12 13s10-3 12-13Z" fill="#fbcf8a"/><circle cx="28.500" cy="53.500" r="4.300" fill="#fbcf8a"/><path d="M33 40c2-8 12-12 24-11l14 12v18c0 8-6 14-13 15h-6c-9-1-16-8-19-20Z" fill="#fbd08a"/><path d="M27.500 52c-2-24 8-44 22-44 13 0 23 14 22 33-5-2-10-6-14-11-7 5-12 9-17 13l-5 12c-3-2-6-3-8-3Z" fill="#b06e02"/><rect x="40" y="41.500" width="31" height="3.200" fill="#5c3b1c"/><rect x="42" y="44.700" width="12.500" height="8.800" rx="1.500" fill="#fff"/><rect x="58" y="44.700" width="11.500" height="8" rx="1.500" fill="#fff"/><rect x="46" y="44.700" width="3.500" height="6" fill="#7a5230"/><rect x="61.500" y="44.700" width="3.500" height="6" fill="#7a5230"/><path d="M57 51c4-2 9-1 11 1-1 6-4 9-7 9s-5-4-4-10Z" fill="#ee6f84"/><rect x="44" y="58" width="4.500" height="3.200" rx="1" fill="#f49a8a"/><rect x="51.500" y="64" width="10.500" height="6.500" rx="1.500" fill="#ef7f92"/><rect x="30" y="97.500" width="3" height="2.500" fill="#8d959c"/><rect x="55" y="96.500" width="2.500" height="3.500" fill="#8d959c"/></g></svg></div>
<div class="t td" style="left:661.7px;top:361.6px"><span style="letter-spacing:0.440px">test3test3</span></div>
<div class="tag tg" style="left:1529.7px;top:359.5px">正常</div>
<div class="tag to" style="left:1609.7px;top:359.5px">工作台</div>
<div class="ab" style="left:1879.2px;top:356.2px;width:34.2px;background:#d9eefb"><span class="abs" style="left:10.40px;top:9.50px;color:#14b1fb;"><svg width="13.4" height="13.4" viewBox="0 0 24 24" fill="currentColor" style=""><path d="M15.728 9.686l-1.414-1.414L5 17.586V19h1.414l9.314-9.314zm1.414-1.414l1.414-1.414-1.414-1.414-1.414 1.414 1.414 1.414zM7.242 21H3v-4.243L16.435 3.322a1 1 0 0 1 1.414 0l2.829 2.829a1 1 0 0 1 0 1.414L7.243 21z"/></svg></span></div>
<div class="ab" style="left:1921.5px;top:356.2px;width:34px;background:#f8e6e8"><span class="abs" style="left:10.00px;top:9.20px;color:#f9736a;"><svg width="14" height="14" viewBox="0 0 24 24" fill="currentColor" style=""><path d="M17 6h5v2h-2v13a1 1 0 0 1-1 1H5a1 1 0 0 1-1-1V8H2V6h5V3a1 1 0 0 1 1-1h8a1 1 0 0 1 1 1v3zm1 2H6v12h12V8zm-9 3h2v6H9v-6zm4 0h2v6h-2v-6zM9 4v2h6V4H9z"/></svg></span></div>
<div class="ab" style="left:1963px;top:356.2px;width:32.3px;background:#f2f3f7"><svg class="abs" style="left:14.6px;top:8.6px" width="4" height="15" viewBox="0 0 4 15" fill="#7584a6"><circle cx="2" cy="1.800" r="1.650"/><circle cx="2" cy="7.600" r="1.650"/><circle cx="2" cy="13.400" r="1.650"/></svg></div>
<div class="hl" style="top:454.40px"></div>
<div class="t td" style="left:555.3px;top:416.4px">3</div>
<div class="abs" style="left:615.7px;top:408.4px;width:38px;height:38px"><svg width="38" height="38.400" viewBox="0 0 100 100" preserveAspectRatio="none"><defs><clipPath id="bc"><rect width="100" height="100" rx="12"/></clipPath><linearGradient id="bg" x1="0" y1="0" x2="0" y2="1"><stop offset=".4" stop-color="#fff"/><stop offset=".7" stop-color="#fcecec"/><stop offset="1" stop-color="#fbe9ea"/></linearGradient></defs><g clip-path="url(#bc)"><rect width="100" height="100" fill="url(#bg)"/><circle cx="90" cy="69" r="6.500" fill="none" stroke="#efc3b0" stroke-width="1.200"/><path d="M86 71l4-7 3 8" fill="none" stroke="#efc3b0" stroke-width="1"/><path d="M19 100c1-9 7-15 17-16h38c8 1 13 7 14 16Z" fill="#b5221b"/><path d="M47 74h10v12c0 5-10 5-10 0Z" fill="#f1e0bf"/><ellipse cx="17" cy="40" rx="4.500" ry="5.500" fill="#f1dfbc"/><ellipse cx="79.500" cy="36.500" rx="4.800" ry="6.800" fill="#f1dfbc"/><path d="M19 45c0-14 12-22 29-22s29 9 29 22c1 8 0 14-3 20-5 8-14 12-26 12s-21-4-26-12c-3-6-4-12-3-20Z" fill="#f3e4c4"/><circle cx="36" cy="47" r="6.200" fill="#fff"/><circle cx="61" cy="44" r="6.200" fill="#fff"/><circle cx="36" cy="47.500" r="2.700" fill="#8b4a12"/><circle cx="61" cy="44.500" r="2.700" fill="#8b4a12"/><ellipse cx="32" cy="56.500" rx="4" ry="1.800" fill="#f8c4c0"/><ellipse cx="66" cy="51.500" rx="4" ry="1.800" fill="#f8c4c0"/><path d="M50 54c-1 3-1 5 1 5" fill="none" stroke="#e6cfae" stroke-width="1.200"/><path d="M48.500 69c1-3 4-4 6.500-2.500" fill="none" stroke="#d2584a" stroke-width="1.400" stroke-linecap="round"/><path d="M12 20c4-6 14-9 24-10 8-2 16-2 22 0 2-5 6-8 10-7 3 2 1 7-4 11 5 1 10 3 10 8 0 3-7 5-16 3l-3 8-5-7-4 10-5-10-5 10c-3-2-4-6-4-10l-7 8c-2-3-2-7 0-11-5 1-10 0-13-3Z" fill="#c4864c"/></g></svg></div>
<div class="t td" style="left:661.7px;top:416.4px"><span style="letter-spacing:0.470px">test2</span></div>
<div class="tag tg" style="left:1529.7px;top:414.3px">正常</div>
<div class="tag to" style="left:1609.7px;top:414.3px">工作台</div>
<div class="t td" style="left:1709.7px;top:416.4px"><span style="letter-spacing:0.400px">2026-04-22 22:07:17</span></div>
<div class="ab" style="left:1879.2px;top:411.0px;width:34.2px;background:#e1f5ff"><span class="abs" style="left:10.40px;top:9.50px;color:#14b1fb;"><svg width="13.4" height="13.4" viewBox="0 0 24 24" fill="currentColor" style=""><path d="M15.728 9.686l-1.414-1.414L5 17.586V19h1.414l9.314-9.314zm1.414-1.414l1.414-1.414-1.414-1.414-1.414 1.414 1.414 1.414zM7.242 21H3v-4.243L16.435 3.322a1 1 0 0 1 1.414 0l2.829 2.829a1 1 0 0 1 0 1.414L7.243 21z"/></svg></span></div>
<div class="ab" style="left:1921.5px;top:411.0px;width:34px;background:#ffedec"><span class="abs" style="left:10.00px;top:9.20px;color:#f9736a;"><svg width="14" height="14" viewBox="0 0 24 24" fill="currentColor" style=""><path d="M17 6h5v2h-2v13a1 1 0 0 1-1 1H5a1 1 0 0 1-1-1V8H2V6h5V3a1 1 0 0 1 1-1h8a1 1 0 0 1 1 1v3zm1 2H6v12h12V8zm-9 3h2v6H9v-6zm4 0h2v6h-2v-6zM9 4v2h6V4H9z"/></svg></span></div>
<div class="ab" style="left:1963px;top:411.0px;width:32.3px;background:#f4f5f8"><svg class="abs" style="left:14.6px;top:8.6px" width="4" height="15" viewBox="0 0 4 15" fill="#7584a6"><circle cx="2" cy="1.800" r="1.650"/><circle cx="2" cy="7.600" r="1.650"/><circle cx="2" cy="13.400" r="1.650"/></svg></div>
<div class="hl" style="top:517.60px"></div>
<div class="t td" style="left:555.3px;top:475.2px">4</div>
<div class="abs" style="left:615.7px;top:467.2px;width:38px;height:38px"><svg width="38" height="38" viewBox="0.700 0 38 38"><path d="M3.800 1h23.200l9 7.600V35.500a1 1 0 0 1-1 1H3.800a1 1 0 0 1-1-1V2a1 1 0 0 1 1-1Z" fill="#1783db"/><path d="M27 1l9 7.600h-6.500A2.500 2.500 0 0 1 27 6.100Z" fill="#8cc3ee"/><text x="10" y="21.300" textLength="17.200" lengthAdjust="spacingAndGlyphs" font-family="Liberation Sans,sans-serif" font-weight="700" font-size="6.600" fill="#fff">PNG</text></svg></div>
<div class="t td" style="left:661.7px;top:463.5px"><span style="letter-spacing:0.566px">devwang</span></div>
<div class="t td" style="left:661.7px;top:486.5px"><span style="letter-spacing:0.505px">888888@qq.com</span></div>
<div class="t td" style="left:1069.7px;top:475.2px"><span style="letter-spacing:0.432px">15888888888</span></div>
<div class="t td" style="left:1189.6px;top:475.2px">云与智慧产业事业群</div>
<div class="tag tg" style="left:1529.7px;top:473.1px">正常</div>
<div class="tag to" style="left:1609.7px;top:473.1px">工作台</div>
<div class="t td" style="left:1709.7px;top:475.2px"><span style="letter-spacing:0.400px">2026-04-25 17:34:23</span></div>
<div class="ab" style="left:1879.2px;top:469.8px;width:34.2px;background:#e1f5ff"><span class="abs" style="left:10.40px;top:9.50px;color:#14b1fb;"><svg width="13.4" height="13.4" viewBox="0 0 24 24" fill="currentColor" style=""><path d="M15.728 9.686l-1.414-1.414L5 17.586V19h1.414l9.314-9.314zm1.414-1.414l1.414-1.414-1.414-1.414-1.414 1.414 1.414 1.414zM7.242 21H3v-4.243L16.435 3.322a1 1 0 0 1 1.414 0l2.829 2.829a1 1 0 0 1 0 1.414L7.243 21z"/></svg></span></div>
<div class="ab" style="left:1921.5px;top:469.8px;width:34px;background:#ffedec"><span class="abs" style="left:10.00px;top:9.20px;color:#f9736a;"><svg width="14" height="14" viewBox="0 0 24 24" fill="currentColor" style=""><path d="M17 6h5v2h-2v13a1 1 0 0 1-1 1H5a1 1 0 0 1-1-1V8H2V6h5V3a1 1 0 0 1 1-1h8a1 1 0 0 1 1 1v3zm1 2H6v12h12V8zm-9 3h2v6H9v-6zm4 0h2v6h-2v-6zM9 4v2h6V4H9z"/></svg></span></div>
<div class="ab" style="left:1963px;top:469.8px;width:32.3px;background:#f4f5f8"><svg class="abs" style="left:14.6px;top:8.6px" width="4" height="15" viewBox="0 0 4 15" fill="#7584a6"><circle cx="2" cy="1.800" r="1.650"/><circle cx="2" cy="7.600" r="1.650"/><circle cx="2" cy="13.400" r="1.650"/></svg></div>
<div class="hl" style="top:572.00px"></div>
<div class="t td" style="left:555.3px;top:534.0px">5</div>
<div class="abs" style="left:615.7px;top:526.0px;width:38px;height:38px"><svg width="38" height="38" viewBox="0.700 0 38 38"><path d="M3.800 1h23.200l9 7.600V35.500a1 1 0 0 1-1 1H3.800a1 1 0 0 1-1-1V2a1 1 0 0 1 1-1Z" fill="#1783db"/><path d="M27 1l9 7.600h-6.500A2.500 2.500 0 0 1 27 6.100Z" fill="#8cc3ee"/><text x="10" y="21.300" textLength="17.200" lengthAdjust="spacingAndGlyphs" font-family="Liberation Sans,sans-serif" font-weight="700" font-size="6.600" fill="#fff">PNG</text></svg></div>
<div class="t td" style="left:661.7px;top:534.0px"><span style="letter-spacing:0.363px">timi_boss</span></div>
<div class="t td" style="left:1069.7px;top:534.0px"><span style="letter-spacing:0.432px">15888888888</span></div>
<div class="t td" style="left:1189.6px;top:534.0px">腾讯集团</div>
<div class="tag tg" style="left:1529.7px;top:531.9px">正常</div>
<div class="tag to" style="left:1609.7px;top:531.9px">工作台</div>
<div class="t td" style="left:1709.7px;top:534.0px"><span style="letter-spacing:0.400px">2026-04-25 16:57:51</span></div>
<div class="ab" style="left:1879.2px;top:528.6px;width:34.2px;background:#e1f5ff"><span class="abs" style="left:10.40px;top:9.50px;color:#14b1fb;"><svg width="13.4" height="13.4" viewBox="0 0 24 24" fill="currentColor" style=""><path d="M15.728 9.686l-1.414-1.414L5 17.586V19h1.414l9.314-9.314zm1.414-1.414l1.414-1.414-1.414-1.414-1.414 1.414 1.414 1.414zM7.242 21H3v-4.243L16.435 3.322a1 1 0 0 1 1.414 0l2.829 2.829a1 1 0 0 1 0 1.414L7.243 21z"/></svg></span></div>
<div class="ab" style="left:1921.5px;top:528.6px;width:34px;background:#ffedec"><span class="abs" style="left:10.00px;top:9.20px;color:#f9736a;"><svg width="14" height="14" viewBox="0 0 24 24" fill="currentColor" style=""><path d="M17 6h5v2h-2v13a1 1 0 0 1-1 1H5a1 1 0 0 1-1-1V8H2V6h5V3a1 1 0 0 1 1-1h8a1 1 0 0 1 1 1v3zm1 2H6v12h12V8zm-9 3h2v6H9v-6zm4 0h2v6h-2v-6zM9 4v2h6V4H9z"/></svg></span></div>
<div class="ab" style="left:1963px;top:528.6px;width:32.3px;background:#f4f5f8"><svg class="abs" style="left:14.6px;top:8.6px" width="4" height="15" viewBox="0 0 4 15" fill="#7584a6"><circle cx="2" cy="1.800" r="1.650"/><circle cx="2" cy="7.600" r="1.650"/><circle cx="2" cy="13.400" r="1.650"/></svg></div>
<div class="hl" style="top:635.20px"></div>
<div class="t td" style="left:555.3px;top:592.8px">6</div>
<div class="abs" style="left:615.7px;top:584.8px;width:38px;height:38px"><svg width="38" height="38.400" viewBox="0 0 100 100" preserveAspectRatio="none"><defs><clipPath id="ac"><rect width="100" height="100" rx="13"/></clipPath></defs><g clip-path="url(#ac)"><rect width="100" height="100" fill="#dcdcdc"/><rect x="82" y="0" width="18" height="28" fill="#fdfdfd"/><rect x="82" y="28" width="18" height="72" fill="#e2e2e2"/><path d="M84 34l14 8M85 48l13 7M84 62l14 6M86 76l12 5M85 88l13 6M91 30l-3 66M96 32l-2 60" stroke="#c4c4c4" stroke-width="1.600" fill="none"/><path d="M14 40c0-16 10-30 30-34 18-3 32 2 36 18 3 14 4 32 0 46-4 14-14 24-24 24-16 0-30-10-36-26-3-8-6-18-6-28Z" fill="#dcdcdc"/><path d="M66 0h17c2 14 3 30 2 46 1 20 0 38-1 54h-6c2-10 0-20 2-30 1-14 1-28-2-40-2-10-6-20-12-30Z" fill="#8f8f8f"/><path d="M79 0h4c2 20 3 44 1 68l-4 4c2-24 1-48-1-72Z" fill="#5c5c5c"/><path d="M58 0h24l-1 24-5-13-4 16-6-14-3 6Z" fill="#5e5e5e"/><path d="M60 0h10l-2 12Z" fill="#2c2c2c"/><path d="M80 68c2 0 3 1 3 3-1 9 1 19 3 29h-8c-2-10-2-23 2-32Z" fill="#141414"/><path d="M34 86c8 6 20 8 30 2l14-14v26H34Z" fill="#e4e4e4"/><path d="M0 72c10 1 18 4 24 9 5 5 9 12 10 19H0Z" fill="#8b8b8b"/><path d="M12 100l12-14 4 4-8 10Z" fill="#b9b9b9"/><path d="M19 64c2 9 8 19 18 25 8 5 18 6 25 3 3-1 5-4 6-7-2 7-8 12-16 12-5 0-9-1-13-3l-4-2-1 8h-5l-1-13c-6-6-9-14-9-23Z" fill="#0c0c0c"/><path d="M30 82c6 7 15 11 24 11 6 0 11-3 14-8" fill="none" stroke="#0c0c0c" stroke-width="3.400" stroke-linecap="round"/><path d="M0 0h34c-6 8-12 18-15 30-3 12-3 24-1 34 1 5 3 9 5 12-4-2-8-6-11-10H0Z" fill="#0a0a0a"/><path d="M4 50c2-1 4 1 5 5 1 5 2 9 4 13-4-3-8-9-9-18Z" fill="#e8e8e8"/><path d="M16 24l8-6-1 8 6-4-2 12-6 2-7 4Z" fill="#e9e9e9"/><path d="M13 40l18-5-1-3-17 5Z" fill="#0b0b0b"/><path d="M20 0h14l-5 34c-1 0-2 0-3-1-2-10-4-22-6-33Z" fill="#0a0a0a"/><path d="M32 0h34c-3 6-6 12-9 19-3 6-6 12-10 18-5-7-8-16-11-24-1-4-3-9-4-13Z" fill="#050505"/><path d="M13 42c6-5 13-7 21-5l-1 2.500c-7-1-13 0-19 4.500Z" fill="#111"/><path d="M61 31c6-4 13-5 19-2l-1 2c-6-2-11-1-17 2Z" fill="#222"/><path d="M48 47c0 2 0 5 2 6" stroke="#8f8f8f" stroke-width="1.600" fill="none" stroke-linecap="round"/><path d="M41 69c8-3 17-4 25-4-3 4-7 8-12 9-5 1-10-1-13-5Z" fill="#e9e9e9" stroke="#b5b5b5" stroke-width="1"/><path d="M41 69l3-1M66 65l-2 2" stroke="#6a6a6a" stroke-width="1.400" stroke-linecap="round"/><circle cx="56" cy="79" r="1.200" fill="#c6c6c6"/></g></svg></div>
<div class="t td" style="left:661.7px;top:581.1px"><span style="letter-spacing:0.694px">admin</span></div>
<div class="t td" style="left:661.7px;top:604.1px"><span style="letter-spacing:0.561px">fssphp@admin.com</span></div>
<div class="t td" style="left:1069.7px;top:592.8px"><span style="letter-spacing:0.432px">15888888888</span></div>
<div class="t td" style="left:1189.6px;top:592.8px">腾讯集团</div>
<div class="tag tg" style="left:1529.7px;top:590.7px">正常</div>
<div class="tag tc" style="left:1609.7px;top:590.7px">统计页面</div>
<div class="t td" style="left:1709.7px;top:592.8px"><span style="letter-spacing:0.400px">2026-04-25 19:53:22</span></div>
<div class="hl" style="top:938.4px"></div>
<div class="t pg" style="left:1063px;top:952.4px;font-family:'Liberation Serif','Noto Serif CJK SC',serif;font-size:14.6px">共 6 条</div>
<div class="abs" style="left:1124.2px;top:952.8px;width:32px;height:32px;border:1px solid #e9ebf0;border-radius:6px;background:#fff"></div>
<svg class="abs" style="left:1136.8px;top:964.2px" width="5.600" height="9.600" viewBox="0 0 5.600 9.600" fill="none" stroke="#b1b4bb" stroke-width="1" stroke-linecap="round" stroke-linejoin="round"><path d="M5 .6L.8 4.800 5 9"/></svg>
<div class="abs" style="left:1164px;top:952.8px;width:32px;height:32px;border-radius:6px;background:#5d87ff;color:#fff;font-size:14px;line-height:32px;text-align:center">1</div>
<div class="abs" style="left:1204.2px;top:952.8px;width:32px;height:32px;border:1px solid #e9ebf0;border-radius:6px;background:#fff"></div>
<svg class="abs" style="left:1217.8px;top:964.2px" width="5.600" height="9.600" viewBox="0 0 5.600 9.600" fill="none" stroke="#b1b4bb" stroke-width="1" stroke-linecap="round" stroke-linejoin="round"><path d="M.6 .6l4.200 4.200L.6 9"/></svg>
<div class="abs" style="left:1256.2px;top:952.8px;width:101.200px;height:32px;border:1px solid #dcdfe6;border-radius:6px;background:#fff"></div>
<div class="t pg" style="left:1268.3px;top:952.8px">10条/页</div>
<svg class="abs" style="left:1334.00px;top:966.40px" width="10.4" height="5.6" viewBox="0 0 10.4 5.6" fill="none" stroke="#a8abb2" stroke-width="1.0" stroke-linecap="round" stroke-linejoin="round"><path d="M0.5 0.5L5.2 5.1L9.9 0.5"/></svg>
<div class="t pg" style="left:1374px;top:952.8px">前往</div>
<div class="abs" style="left:1409.600px;top:952.8px;width:55.600px;height:32px;border:1px solid #dcdfe6;border-radius:6px;background:#fff;font-size:14px;line-height:30px;text-align:center;color:#606266">1</div>
<div class="t pg" style="left:1473.2px;top:952.8px">页</div>
</div></body></html>
